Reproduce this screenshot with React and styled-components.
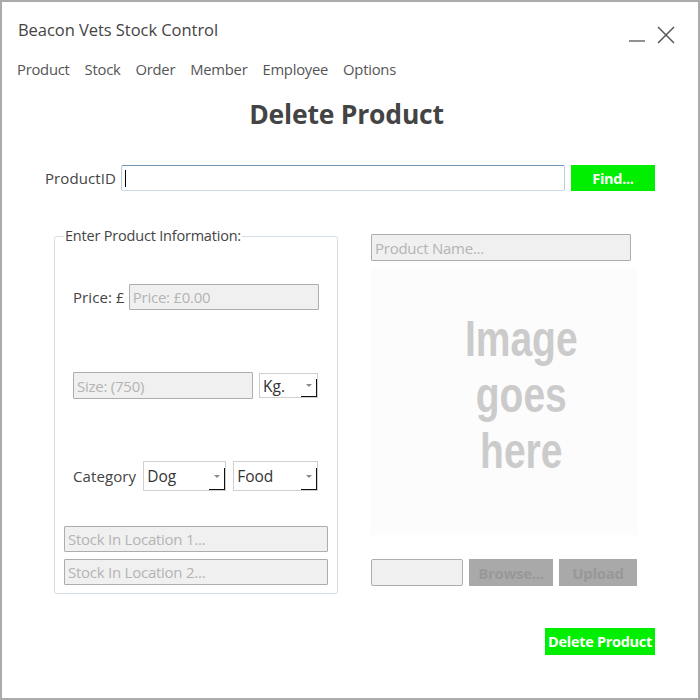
import styled, { createGlobalStyle } from 'styled-components';

const GlobalStyle = createGlobalStyle`
  html, body {
    margin: 0;
    padding: 0;
    background: #fff;
  }
  * {
    box-sizing: border-box;
  }
`;

const Window = styled.div`
  width: 700px;
  height: 700px;
  border: 2px solid #ababab;
  background: #fff;
  display: flex;
  flex-direction: column;
  font-family: 'Open Sans', 'Noto Sans', sans-serif;
  color: #444;
`;

const TitleBar = styled.div`
  display: flex;
  align-items: center;
  justify-content: space-between;
  padding: 15px 22px 0 16px;
  height: 40px;
`;

const Title = styled.div`
  font-size: 16.5px;
  line-height: 22px;
  color: #444;
  letter-spacing: -0.05px;
`;

const Controls = styled.div`
  display: flex;
  align-items: center;
  gap: 10px;
  margin-top: 10px;
`;

const MenuBar = styled.nav`
  display: flex;
  gap: 15px;
  padding: 17px 0 0 15px;
`;

const MenuItem = styled.span`
  font-size: 14.8px;
  line-height: 20px;
  color: #555;
  letter-spacing: -0.25px;
`;

const Heading = styled.h1`
  margin: 18px 0 0;
  padding-right: 7px;
  text-align: center;
  font-size: 26.5px;
  line-height: 34px;
  font-weight: 700;
  color: #444;
  letter-spacing: -0.2px;
`;

const Content = styled.div`
  display: flex;
  flex-direction: column;
  padding: 0 43px;
`;

const FindRow = styled.div`
  display: flex;
  align-items: center;
  margin-top: 34px;
`;

const Label = styled.label`
  font-size: 15px;
  color: #444;
  white-space: nowrap;
  letter-spacing: 0.1px;
  margin-right: ${({ gap }) => gap || 5}px;
`;

const TextBox = styled.div`
  flex: 1;
  height: 26px;
  border: 1px solid;
  border-color: #6f95b4 #b7cfe2 #c7dced #b7cfe2;
  border-radius: 2px;
  background: #fff;
  display: flex;
  align-items: center;
  padding-left: 3px;
`;

const Caret = styled.span`
  width: 1px;
  height: 17px;
  background: #000;
`;

const DisabledBox = styled.div`
  width: ${({ w }) => w}px;
  height: ${({ h }) => h || 26}px;
  border: 1px solid #adadad;
  border-radius: 1px;
  background: #f0f0f0;
  color: #b4b4b4;
  font-size: 15px;
  letter-spacing: -0.25px;
  display: flex;
  align-items: center;
  padding-left: 3px;
  white-space: nowrap;
  overflow: hidden;
`;

const GreenButton = styled.button`
  width: ${({ w }) => w}px;
  height: ${({ h }) => h || 26}px;
  border: none;
  background: #00ee00;
  color: #fff;
  font-family: inherit;
  font-weight: 700;
  font-size: 14.5px;
  letter-spacing: -0.3px;
  padding: 0;
  margin-left: ${({ ml }) => ml || 0}px;
  white-space: nowrap;
`;

const GreyButton = styled.button`
  width: ${({ w }) => w}px;
  height: 27px;
  border: none;
  background: #a9a9a9;
  color: #989898;
  font-family: inherit;
  font-weight: 700;
  font-size: 15px;
  letter-spacing: -0.3px;
  padding: 0;
`;

const Main = styled.div`
  display: flex;
  align-items: flex-start;
  margin-top: 36px;
  padding-left: 9px;
`;

const GroupBox = styled.fieldset`
  width: 284px;
  height: 367px;
  margin: 0;
  padding: 0 9px 8px 9px;
  min-width: 0;
  border: 1px solid #d5dfe6;
  border-radius: 3px;
  display: flex;
  flex-direction: column;
`;

const Legend = styled.legend`
  font-size: 14.5px;
  line-height: 18px;
  color: #444;
  padding: 0 1px;
  margin-left: 0;
  letter-spacing: -0.2px;
`;

const FieldRow = styled.div`
  display: flex;
  align-items: center;
  padding-left: 9px;
  margin-top: ${({ mt }) => mt}px;
`;

const StockList = styled.div`
  display: flex;
  flex-direction: column;
  gap: 7px;
  margin-top: auto;
`;

const Select = styled.div`
  position: relative;
  width: ${({ w }) => w}px;
  height: ${({ h }) => h || 26}px;
  border: 1px solid #cfcfcf;
  background: #fff;
  display: flex;
  align-items: center;
  padding-left: 3px;
  font-size: 15.5px;
  color: #333;
  margin-left: ${({ ml }) => ml || 0}px;
`;

const ArrowBox = styled.span`
  position: absolute;
  right: 0;
  bottom: 0;
  width: 16px;
  height: ${({ h }) => h || 18}px;
  border-right: 1px solid #111;
  border-bottom: 1px solid #111;
  display: flex;
  align-items: center;
  justify-content: center;
  &::after {
    content: '';
    border-left: 3px solid transparent;
    border-right: 3px solid transparent;
    border-top: 3px solid #8a8a8a;
    margin-top: -4px;
  }
`;

const RightColumn = styled.div`
  display: flex;
  flex-direction: column;
  margin-left: 33px;
  margin-top: 7px;
  width: 266px;
`;

const ImageArea = styled.div`
  width: 266px;
  height: 266px;
  margin-top: 8px;
  background: #fcfcfc;
  display: flex;
  flex-direction: column;
  align-items: center;
  justify-content: center;
  padding-bottom: 14px;
`;

const ImageText = styled.div`
  font-family: 'Liberation Sans', Arial, sans-serif;
  font-weight: 700;
  font-size: 50px;
  line-height: 56px;
  color: #cbcbcb;
  text-align: center;
  margin-left: 34px;
  transform: scaleX(0.78);
`;

const UploadRow = styled.div`
  display: flex;
  gap: 6px;
  margin-top: 24px;
`;

const FileBox = styled.div`
  width: 92px;
  height: 27px;
  border: 1px solid #adadad;
  border-radius: 2px;
  background: #f0f0f0;
`;

const Footer = styled.div`
  display: flex;
  justify-content: flex-end;
  margin-top: 34px;
`;

const menu = ['Product', 'Stock', 'Order', 'Member', 'Employee', 'Options'];

export default function App() {
  return (
    <>
      <GlobalStyle />
      <Window>
        <TitleBar>
          <Title>Beacon Vets Stock Control</Title>
          <Controls>
            <svg width="18" height="18" viewBox="0 0 18 18">
              <line x1="1" y1="15" x2="17" y2="15" stroke="#555" strokeWidth="1.3" />
            </svg>
            <svg width="20" height="18" viewBox="0 0 20 18">
              <path d="M2 1 L18 17 M18 1 L2 17" stroke="#555" strokeWidth="1.5" fill="none" />
            </svg>
          </Controls>
        </TitleBar>
        <MenuBar>
          {menu.map((m) => (
            <MenuItem key={m}>{m}</MenuItem>
          ))}
        </MenuBar>
        <Heading>Delete Product</Heading>
        <Content>
          <FindRow>
            <Label>ProductID</Label>
            <TextBox>
              <Caret />
            </TextBox>
            <GreenButton w={84} ml={6}>Find...</GreenButton>
          </FindRow>
          <Main>
            <GroupBox>
              <Legend>Enter Product Information:</Legend>
              <FieldRow mt={39}>
                <Label gap={4}>Price: £</Label>
                <DisabledBox w={190}>Price: £0.00</DisabledBox>
              </FieldRow>
              <FieldRow mt={62}>
                <DisabledBox w={180} h={27}>Size: (750)</DisabledBox>
                <Select w={59} h={25} ml={6}>
                  Kg.
                  <ArrowBox h={18} />
                </Select>
              </FieldRow>
              <FieldRow mt={62}>
                <Label gap={7}>Category</Label>
                <Select w={83} h={30}>
                  Dog
                  <ArrowBox h={22} />
                </Select>
                <Select w={85} h={30} ml={7}>
                  Food
                  <ArrowBox h={22} />
                </Select>
              </FieldRow>
              <StockList>
                <DisabledBox w={264}>Stock In Location 1...</DisabledBox>
                <DisabledBox w={264}>Stock In Location 2...</DisabledBox>
              </StockList>
            </GroupBox>
            <RightColumn>
              <DisabledBox w={260} h={27}>Product Name...</DisabledBox>
              <ImageArea>
                <ImageText>
                  Image
                  <br />
                  goes
                  <br />
                  here
                </ImageText>
              </ImageArea>
              <UploadRow>
                <FileBox />
                <GreyButton w={84}>Browse...</GreyButton>
                <GreyButton w={78}>Upload</GreyButton>
              </UploadRow>
            </RightColumn>
          </Main>
          <Footer>
            <GreenButton w={110} h={27}>Delete Product</GreenButton>
          </Footer>
        </Content>
      </Window>
    </>
  );
}
